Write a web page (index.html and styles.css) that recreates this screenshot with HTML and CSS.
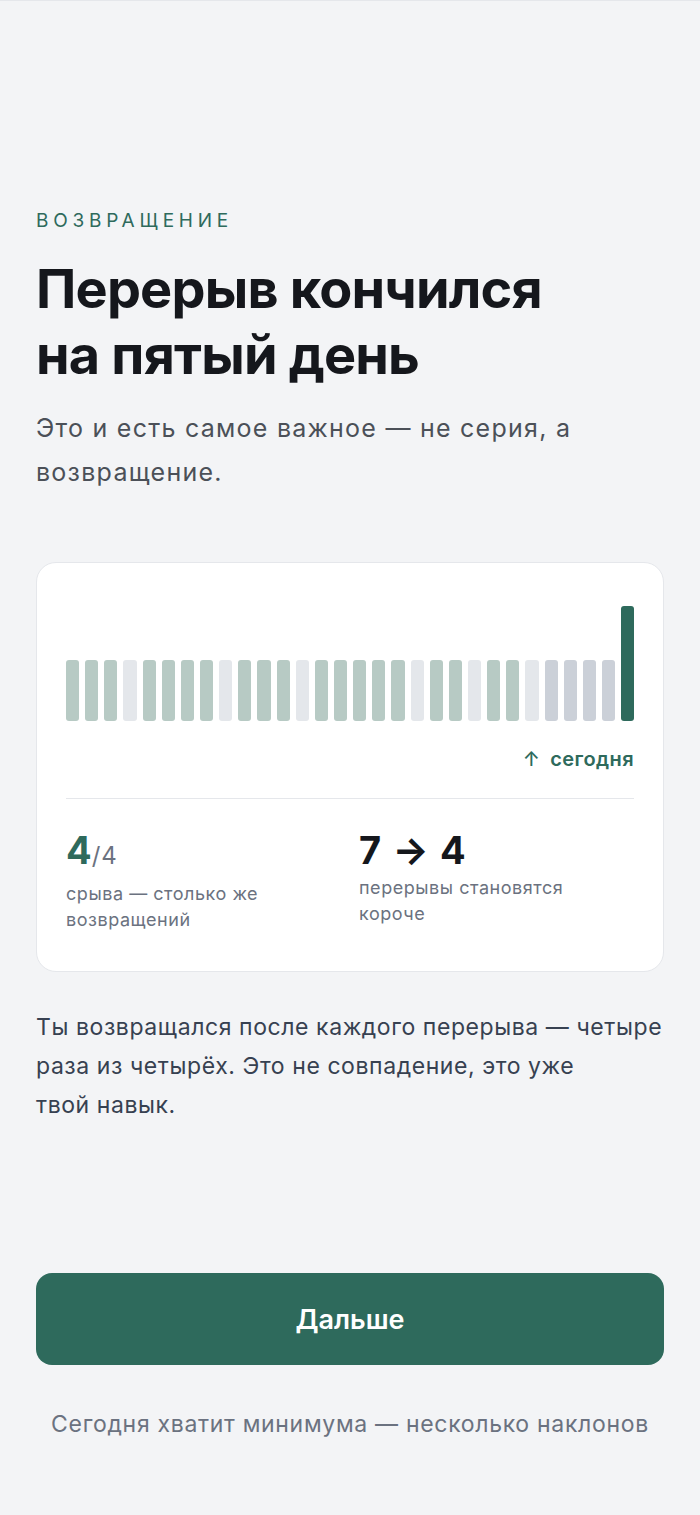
FILE: index.html
```html
<!DOCTYPE html>
<html lang="ru">
<head>
  <meta charset="UTF-8">
  <meta name="viewport" content="width=device-width, initial-scale=1.0">
  <title>Возвращение</title>
  <link rel="stylesheet" href="styles.css">
</head>
<body>
  <div class="screen">
    <!-- Intro -->
    <div class="eyebrow">Возвращение</div>
    <h1 class="title">Перерыв кончился<br>на пятый день</h1>
    <p class="subtitle">Это и есть самое важное — не серия, а возвращение.</p>

    <!-- Streak card -->
    <div class="card">
      <div class="bars">
        <span class="bar done"></span>
        <span class="bar done"></span>
        <span class="bar done"></span>
        <span class="bar miss"></span>
        <span class="bar done"></span>
        <span class="bar done"></span>
        <span class="bar done"></span>
        <span class="bar done"></span>
        <span class="bar miss"></span>
        <span class="bar done"></span>
        <span class="bar done"></span>
        <span class="bar done"></span>
        <span class="bar miss"></span>
        <span class="bar done"></span>
        <span class="bar done"></span>
        <span class="bar done"></span>
        <span class="bar done"></span>
        <span class="bar done"></span>
        <span class="bar miss"></span>
        <span class="bar done"></span>
        <span class="bar done"></span>
        <span class="bar miss"></span>
        <span class="bar done"></span>
        <span class="bar done"></span>
        <span class="bar miss"></span>
        <span class="bar pause"></span>
        <span class="bar pause"></span>
        <span class="bar pause"></span>
        <span class="bar pause"></span>
        <span class="bar today"></span>
      </div>
      <div class="today-label"><span class="today-arrow">↑</span>сегодня</div>

      <div class="stats">
        <div class="stat">
          <div class="stat-value"><span class="accent">4</span><span class="of">/4</span></div>
          <div class="stat-label">срыва — столько же возвращений</div>
        </div>
        <div class="stat">
          <div class="stat-value">7 → 4</div>
          <div class="stat-label">перерывы становятся короче</div>
        </div>
      </div>
    </div>

    <p class="note">Ты возвращался после каждого перерыва — четыре раза из четырёх. Это не совпадение, это уже твой навык.</p>

    <!-- Actions -->
    <a href="#" class="next-btn">Дальше</a>
    <div class="hint">Сегодня хватит минимума — несколько наклонов</div>
  </div>
</body>
</html>
```

FILE: styles.css
```css
:root {
  --color-bg: #f3f4f6;
  --color-card: #ffffff;
  --color-border: #e5e7eb;
  --color-green: #2e6a5c;
  --color-green-soft: #b7cac4;
  --color-miss: #e4e7eb;
  --color-pause: #cbd0d8;
  --color-text: #15171c;
  --color-body: #374151;
  --color-muted: #6b7280;

  --font-main: 'Inter', 'Noto Sans', sans-serif;
}

* {
  margin: 0;
  padding: 0;
  box-sizing: border-box;
}

body {
  background-color: var(--color-bg);
  color: var(--color-text);
  font-family: var(--font-main);
  border-top: 1px solid var(--color-border);
}

.screen {
  display: flex;
  flex-direction: column;
  min-height: 1514px;
  padding: 0 36px;
}

.eyebrow {
  margin-top: 209px;
  font-size: 19px;
  line-height: 22px;
  letter-spacing: 0.25em;
  text-transform: uppercase;
  color: var(--color-green);
}

.title {
  margin-top: 24px;
  font-size: 54px;
  line-height: 66px;
  font-weight: 700;
  letter-spacing: -0.015em;
  color: var(--color-text);
}

.subtitle {
  margin-top: 18px;
  font-size: 25px;
  line-height: 44px;
  letter-spacing: 0.05em;
  color: #4b5058;
}

/* Card */
.card {
  margin-top: 68px;
  background: var(--color-card);
  border: 1px solid var(--color-border);
  border-radius: 20px;
  padding: 43px 29px 38px;
}

.bars {
  display: flex;
  align-items: flex-end;
  gap: 6px;
  height: 115px;
}

.bar {
  flex: 1;
  height: 61px;
  border-radius: 3px;
}

.bar.done { background: var(--color-green-soft); }
.bar.miss { background: var(--color-miss); }
.bar.pause { background: var(--color-pause); }
.bar.today {
  height: 115px;
  background: var(--color-green);
}

.today-label {
  margin-top: 26px;
  text-align: right;
  font-size: 20px;
  line-height: 24px;
  font-weight: 600;
  letter-spacing: 0.02em;
  color: var(--color-green);
  padding-bottom: 27px;
  border-bottom: 1px solid var(--color-border);
}

.today-arrow {
  margin-right: 10px;
  font-weight: 500;
}

.stats {
  display: grid;
  grid-template-columns: 1fr 1fr;
  gap: 18px;
  margin-top: 29px;
}

.stat-value {
  font-size: 38px;
  line-height: 44px;
  font-weight: 700;
  letter-spacing: 0.03em;
  color: var(--color-text);
}

.stat-value .accent {
  color: var(--color-green);
  letter-spacing: 0;
}

.stat-value .of {
  font-size: 24px;
  font-weight: 400;
  letter-spacing: 0.04em;
  color: var(--color-muted);
}

.stat-label {
  margin-top: 3px;
  font-size: 18px;
  line-height: 26px;
  letter-spacing: 0.03em;
  color: var(--color-muted);
  max-width: 230px;
}

.note {
  margin-top: 36px;
  font-size: 23px;
  line-height: 39px;
  letter-spacing: 0.025em;
  color: var(--color-body);
  text-wrap: pretty;
}

/* Actions */
.next-btn {
  margin-top: 148px;
  display: flex;
  align-items: center;
  justify-content: center;
  height: 92px;
  border-radius: 16px;
  background: var(--color-green);
  color: #ffffff;
  font-size: 27px;
  font-weight: 600;
  text-decoration: none;
}

.hint {
  margin-top: 44px;
  text-align: center;
  font-size: 23px;
  line-height: 30px;
  letter-spacing: 0.03em;
  color: var(--color-muted);
}
```
